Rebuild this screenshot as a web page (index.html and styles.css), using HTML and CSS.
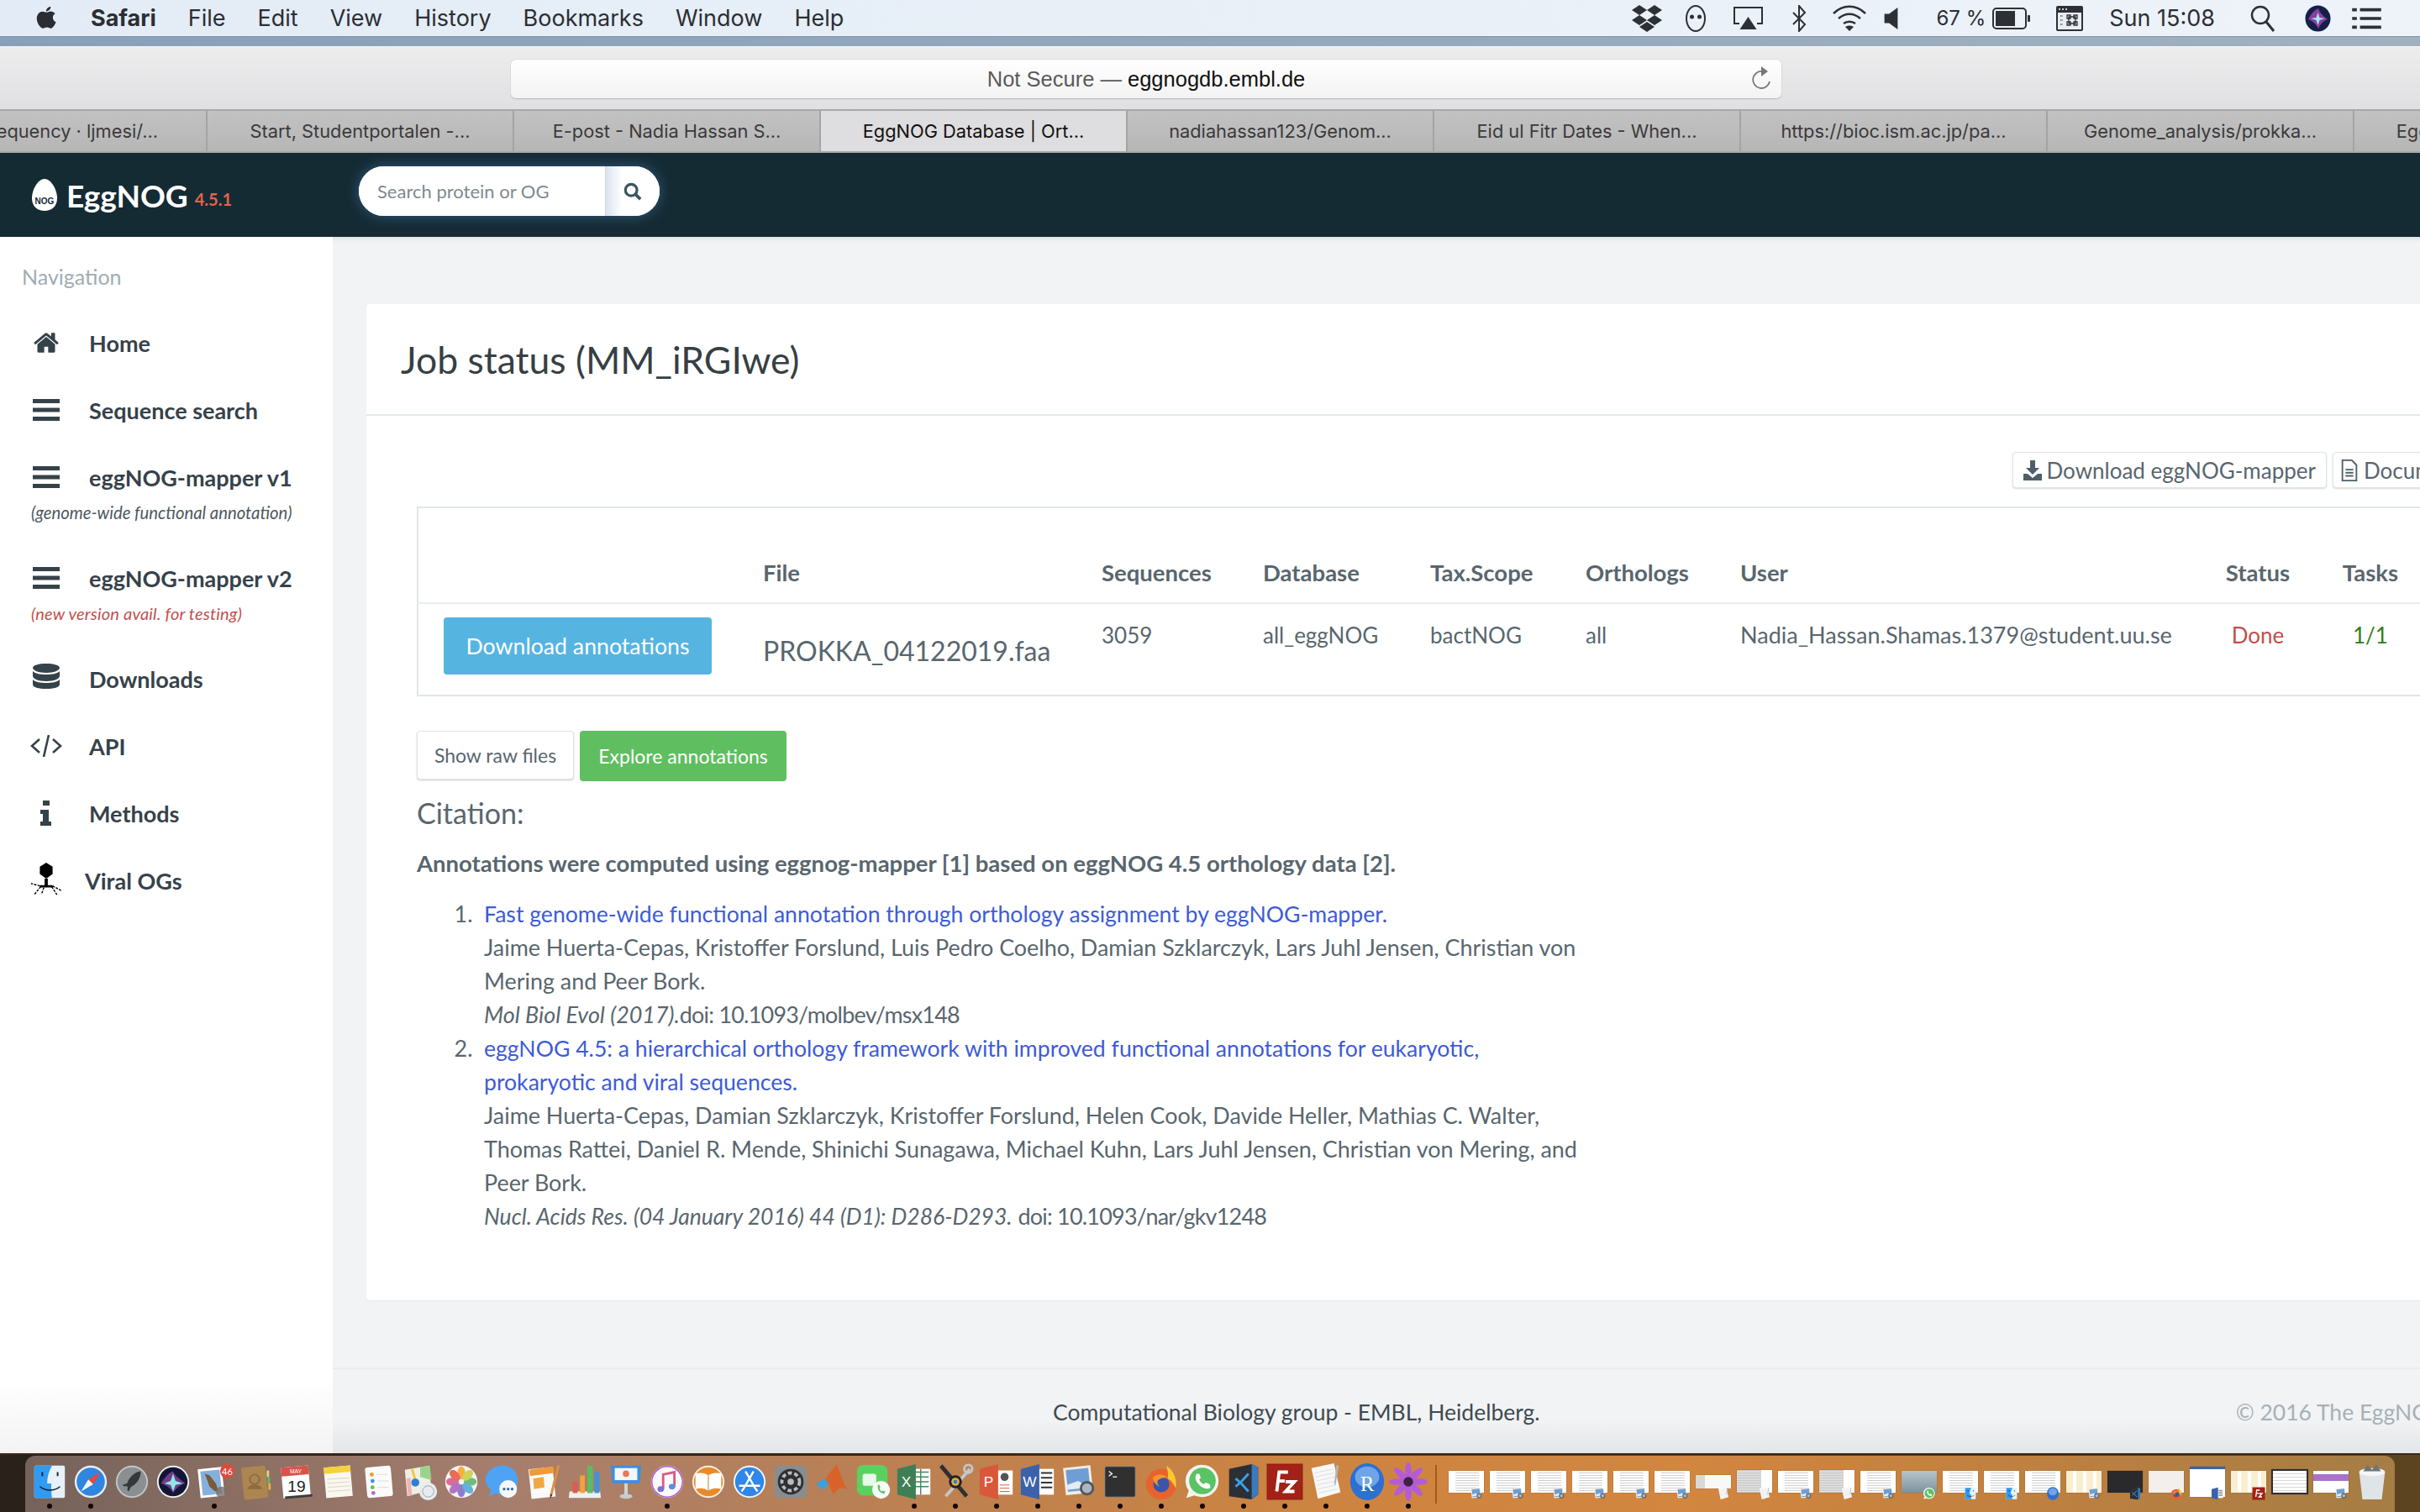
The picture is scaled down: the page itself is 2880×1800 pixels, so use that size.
FILE: index.html
```html
<!DOCTYPE html>
<html lang="en">
<head>
<meta charset="utf-8">
<title>EggNOG Database</title>
<link rel="stylesheet" href="styles.css">
</head>
<body>
<svg class="defs" width="0" height="0" aria-hidden="true">
  <symbol id="i-finder" viewBox="0 0 48 48"><rect x="5" y="4" width="38" height="40" rx="2" fill="#e6f1fb"/><path d="M5 6a2 2 0 0 1 2-2h20c-4 8-6 14-6 22h5c0 6 0 12 1 18H7a2 2 0 0 1-2-2z" fill="#2f9bf2"/><path d="M15 12v5M34 12v5" stroke="#123" stroke-width="2"/><path d="M12 30c7 6 18 6 25 0" stroke="#123" stroke-width="1.600" fill="none"/></symbol>
  <symbol id="i-safari" viewBox="0 0 48 48"><circle cx="24" cy="24" r="20" fill="#e8eef3"/><circle cx="24" cy="24" r="17.500" fill="#2f86e0"/><path d="M36 12 21 21l6 6z" fill="#ef4436"/><path d="M12 36l9-15 6 6z" fill="#f3f6f8"/></symbol>
  <symbol id="i-launch" viewBox="0 0 48 48"><circle cx="24" cy="24" r="20" fill="#c3c6c8"/><circle cx="24" cy="24" r="18" fill="#8a8f92"/><path d="M35 11c-8 1-14 7-17 15l-6 2 3 2 2-1 2 2-1 3 2 2 3-6c8-3 12-12 12-19z" fill="#35383b"/></symbol>
  <symbol id="i-siri" viewBox="0 0 48 48"><circle cx="24" cy="24" r="20" fill="#f0f2f3"/><circle cx="24" cy="24" r="18" fill="#121636"/><path d="M9 26c6-9 10-13 15-15 2 6 9 10 15 15-6 2-11 5-15 12-3-7-9-10-15-12z" fill="#8f4aa8" opacity=".75"/><path d="M24 14l3 9 9 3-9 2-3 8-3-8-8-2 8-3z" fill="#8fe8e4"/></symbol>
  <symbol id="i-mail" viewBox="0 0 48 48"><rect x="5" y="7" width="30" height="36" fill="#fff" transform="rotate(-6 20 24)"/><rect x="8" y="10" width="24" height="30" fill="#86b0dc" transform="rotate(-6 20 24)"/><path d="M12 14l6 2 8 10 3 9-4 1-7-6-3-9z" fill="#7a5a3a"/><circle cx="33" cy="37" r="7" fill="#7e6f68" opacity=".8"/></symbol>
  <symbol id="i-contacts" viewBox="0 0 48 48"><rect x="8" y="5" width="30" height="40" rx="2" fill="#ab8650" transform="rotate(-6 24 24)"/><rect x="38" y="10" width="3" height="8" fill="#e0cf84"/><rect x="39" y="18" width="3" height="8" fill="#6bb36a"/><rect x="40" y="26" width="3" height="8" fill="#e8b03c"/><circle cx="23" cy="21" r="6" fill="none" stroke="#8c6c3e" stroke-width="2"/><path d="M14 33c2-7 16-7 18 0z" fill="#8c6c3e"/></symbol>
  <symbol id="i-cal" viewBox="0 0 48 48"><rect x="6" y="5" width="34" height="38" fill="#fdfdfd" transform="rotate(-5 24 24)"/><rect x="6" y="5" width="34" height="11" fill="#d9534a" transform="rotate(-5 24 24)"/><rect x="8" y="41" width="34" height="3" fill="#3c3c3c" transform="rotate(-5 24 24)"/></symbol>
  <symbol id="i-notes" viewBox="0 0 48 48"><rect x="8" y="5" width="33" height="38" fill="#faf8ee" transform="rotate(-5 24 24)"/><rect x="8" y="5" width="33" height="8" fill="#f5d13c" transform="rotate(-5 24 24)"/><path d="M11 21l28-2M11 26l28-2M12 31l28-2M12 36l28-2" stroke="#d8d3c6"/></symbol>
  <symbol id="i-remind" viewBox="0 0 48 48"><rect x="8" y="5" width="32" height="38" rx="3" fill="#fbfbfb" transform="rotate(-5 24 24)"/><circle cx="15" cy="15" r="2.500" fill="#f39a2b"/><circle cx="16" cy="23" r="2.500" fill="#3f8fe8"/><circle cx="16" cy="31" r="2.500" fill="#6cc04a"/><circle cx="17" cy="38" r="2.500" fill="#b368d8"/><path d="M21 15h14M22 23h14M22 31h14" stroke="#ddd"/></symbol>
  <symbol id="i-maps" viewBox="0 0 48 48"><path d="M5 9l30-5 3 30-30 8z" fill="#eef0e4"/><path d="M24 6l12-2 2 18-14-4z" fill="#9bd38d"/><path d="M7 20l5-1 2 22-5 1z" fill="#f0b4b4"/><path d="M14 8l4 14" stroke="#f2c64c" stroke-width="3"/><circle cx="18" cy="25" r="5" fill="#2e7fd6"/><circle cx="34" cy="36" r="11" fill="#e9ecee"/><circle cx="34" cy="36" r="7" fill="none" stroke="#9aa3a9"/></symbol>
  <symbol id="i-photos" viewBox="0 0 48 48"><circle cx="24" cy="24" r="20" fill="#f4f4f4"/><g opacity=".85"><ellipse cx="24" cy="13" rx="5" ry="8" fill="#f5a623"/><ellipse cx="24" cy="35" rx="5" ry="8" fill="#7b68c8"/><ellipse cx="13" cy="24" rx="8" ry="5" fill="#d2568f"/><ellipse cx="35" cy="24" rx="8" ry="5" fill="#58b368"/><ellipse cx="16" cy="16" rx="5" ry="8" fill="#e8543f" transform="rotate(-45 16 16)"/><ellipse cx="32" cy="16" rx="5" ry="8" fill="#c9cf3f" transform="rotate(45 32 16)"/><ellipse cx="16" cy="32" rx="5" ry="8" fill="#a35fb8" transform="rotate(45 16 32)"/><ellipse cx="32" cy="32" rx="5" ry="8" fill="#4aa7d8" transform="rotate(-45 32 32)"/></g></symbol>
  <symbol id="i-msg" viewBox="0 0 48 48"><path d="M24 4c11 0 19 8 19 18S35 40 24 40c-3 0-6-1-8-2l-9 4 3-8c-4-3-7-8-7-13C3 12 13 4 24 4z" fill="#4ea3f5"/><circle cx="31" cy="33" r="11" fill="#f4f7fa"/><circle cx="26" cy="33" r="1.700" fill="#37689c"/><circle cx="31" cy="33" r="1.700" fill="#37689c"/><circle cx="36" cy="33" r="1.700" fill="#37689c"/></symbol>
  <symbol id="i-pages" viewBox="0 0 48 48"><rect x="7" y="7" width="30" height="37" fill="#fafafa" transform="rotate(-6 22 26)"/><path d="M6 9l30-4 1 8-30 4z" fill="#f29a38"/><path d="M11 20l13-2 1 13-13 2z" fill="#f0a843"/><path d="M41 3l3 1-9 36-3-1z" fill="#e0913c"/><path d="M32 39l3 1-3 5z" fill="#333"/></symbol>
  <symbol id="i-numbers" viewBox="0 0 48 48"><path d="M5 36h38l1 8H4z" fill="#f0f0f0"/><rect x="9" y="24" width="6" height="14" fill="#e05a4d"/><rect x="18" y="16" width="6" height="22" fill="#f2a23a"/><rect x="27" y="4" width="7" height="34" fill="#5dbb63"/><rect x="36" y="12" width="6" height="26" fill="#3f93dc"/></symbol>
  <symbol id="i-keynote" viewBox="0 0 48 48"><path d="M5 4h38l-2 22H7z" fill="#3d8fe0"/><rect x="10" y="7" width="28" height="15" fill="#f4f6f8"/><circle cx="24" cy="14" r="4" fill="#e87b55"/><rect x="22" y="26" width="4" height="15" fill="#d0d6da"/><ellipse cx="24" cy="42" rx="8" ry="3" fill="#c6ccd0"/></symbol>
  <symbol id="i-itunes" viewBox="0 0 48 48"><circle cx="24" cy="24" r="20" fill="#fafafa"/><circle cx="24" cy="24" r="19" fill="none" stroke="#b05ad0" stroke-width="1.500"/><path d="M19 33V15l14-3v18" fill="none" stroke="#d95b87" stroke-width="3"/><ellipse cx="16" cy="33" rx="4" ry="3.500" fill="#7b6ed8"/><ellipse cx="30" cy="30" rx="4" ry="3.500" fill="#5a90e0"/></symbol>
  <symbol id="i-books" viewBox="0 0 48 48"><circle cx="24" cy="24" r="20" fill="#f3f0e8"/><circle cx="24" cy="24" r="18" fill="#e98a28"/><path d="M8 14c6-2 12-1 16 2 4-3 10-4 16-2v19c-6-2-12-1-16 2-4-3-10-4-16-2z" fill="#fff"/><path d="M24 16v19" stroke="#c9782d"/></symbol>
  <symbol id="i-appstore" viewBox="0 0 48 48"><circle cx="24" cy="24" r="20" fill="#f2f6fa"/><circle cx="24" cy="24" r="18" fill="#2f87ea"/><path d="M19 11l12 21M29 11L17 32M11 29h26M14 36l3-4M34 36l-3-4" stroke="#fff" stroke-width="2.500" fill="none"/></symbol>
  <symbol id="i-prefs" viewBox="0 0 48 48"><rect x="4" y="4" width="40" height="40" rx="6" fill="#8a8d8f"/><circle cx="24" cy="24" r="16" fill="#2e3032"/><circle cx="24" cy="24" r="11" fill="none" stroke="#b9bcbe" stroke-width="4" stroke-dasharray="5 3"/><circle cx="24" cy="24" r="4" fill="#b9bcbe"/></symbol>
  <symbol id="i-matlab" viewBox="0 0 48 48"><path d="M4 26l12-6 6 6-10 8z" fill="#3f9fd8"/><path d="M16 20L30 2c3 6 8 26 14 32-8-4-12-3-18 6-4-8-6-14-10-20z" fill="#d9622b"/></symbol>
  <symbol id="i-facetime" viewBox="0 0 48 48"><rect x="4" y="3" width="38" height="38" rx="8" fill="#5ad15f"/><rect x="11" y="14" width="17" height="15" rx="3" fill="#e8f8e9"/><circle cx="34" cy="34" r="11" fill="#fafafa"/><path d="M30 28c-1 6 2 10 8 11l1-3-3-1-1 1c-2-1-2-2-3-4l1-1-1-3z" fill="#5ac15f"/></symbol>
  <symbol id="i-excel" viewBox="0 0 48 48"><rect x="22" y="8" width="22" height="32" fill="#fff"/><path d="M24 12h18M24 18h18M24 24h18M24 30h18M32 8v32" stroke="#3f8a5a" stroke-width="1.500"/><path d="M3 8l23-6v44L3 40z" fill="#3f7f56"/></symbol>
  <symbol id="i-tools" viewBox="0 0 48 48"><path d="M6 4l32 38" stroke="#2f2f2f" stroke-width="5"/><path d="M42 8L12 42" stroke="#c4c7c9" stroke-width="4"/><circle cx="40" cy="8" r="5" fill="none" stroke="#c4c7c9" stroke-width="3"/><circle cx="24" cy="24" r="8" fill="#222"/><circle cx="24" cy="24" r="5" fill="#e8b03c"/><circle cx="24" cy="24" r="2.500" fill="#3a7ed0"/></symbol>
  <symbol id="i-ppt" viewBox="0 0 48 48"><rect x="24" y="10" width="20" height="30" fill="#fff"/><path d="M28 28h12M28 32h12M28 36h12" stroke="#d9563b"/><circle cx="34" cy="18" r="5" fill="#555"/><path d="M3 8l23-6v44L3 40z" fill="#d9583a"/></symbol>
  <symbol id="i-word" viewBox="0 0 48 48"><rect x="22" y="8" width="22" height="32" fill="#fff"/><path d="M28 13h14M28 19h14M28 25h14M28 31h14" stroke="#333" stroke-width="2"/><path d="M3 8l23-6v44L3 40z" fill="#3a62ab"/></symbol>
  <symbol id="i-preview" viewBox="0 0 48 48"><rect x="6" y="5" width="34" height="34" fill="#f1ede4" transform="rotate(-6 24 22)"/><rect x="9" y="8" width="28" height="27" fill="#6f9ed4" transform="rotate(-6 24 22)"/><path d="M9 28l14-5 14 8-27 3z" fill="#e5eef5"/><circle cx="34" cy="32" r="9" fill="#54565a"/><circle cx="34" cy="32" r="6" fill="#a7b8c4"/></symbol>
  <symbol id="i-term" viewBox="0 0 48 48"><rect x="5" y="5" width="38" height="38" rx="2" fill="#303030" stroke="#8d8d8d"/><path d="M10 11l4 3-4 3" stroke="#eee" stroke-width="1.500" fill="none"/><path d="M15 18h5" stroke="#eee" stroke-width="1.500"/></symbol>
  <symbol id="i-firefox" viewBox="0 0 48 48"><circle cx="24" cy="27" r="19" fill="#e8632c"/><path d="M30 4c10 6 14 18 12 28-3-6-6-10-10-12 1-6 0-11-2-16z" fill="#f9c92f"/><circle cx="24" cy="27" r="10" fill="#3d55a8"/><path d="M14 18c6-4 14-4 18 2-4-2-8-1-12 2-2 3 0 6 2 8-5-2-9-7-8-12z" fill="#f4932f"/></symbol>
  <symbol id="i-whatsapp" viewBox="0 0 48 48"><path d="M24 3a20 20 0 0 1 0 40c-4 0-7-1-10-2l-10 3 3-9A20 20 0 0 1 24 3z" fill="#f2f4f2"/><circle cx="24" cy="23" r="16.500" fill="#5ac363"/><path d="M17 14c-3 3-2 9 3 14s11 6 14 3l-1-4-5-2-2 2c-3-1-5-3-6-6l2-2-2-5z" fill="#fff"/></symbol>
  <symbol id="i-vscode" viewBox="0 0 48 48"><path d="M6 8l28-6 8 4v34l-8 6-28-4z" fill="#2b2f36"/><path d="M34 2l8 4v34l-8 6z" fill="#3a79bd"/><path d="M14 20l6 5-6 5M30 14L20 25l10 11" stroke="#3fa0e6" stroke-width="3" fill="none"/></symbol>
  <symbol id="i-fz" viewBox="0 0 48 48"><rect x="2" y="2" width="44" height="44" fill="#a32116" stroke="#7e1810" stroke-dasharray="2 1"/><path d="M14 36l3-24h11M15 23h9M25 24h11L25 36h11" fill="none" stroke="#fff" stroke-width="4"/></symbol>
  <symbol id="i-textedit" viewBox="0 0 48 48"><path d="M6 7l28-6 8 36-28 8z" fill="#f8f8f8"/><path d="M10 13l23-5M11 18l23-5M12 23l23-5M13 28l23-5M14 33l23-5M15 38l23-5" stroke="#dcdcdc"/><path d="M37 3l3 1-4 24-2-1z" fill="#aeb9bf"/></symbol>
  <symbol id="i-r" viewBox="0 0 48 48"><ellipse cx="24" cy="24" rx="21" ry="23" fill="#2d6fd3"/><ellipse cx="24" cy="18" rx="15" ry="13" fill="#8cbcf0" opacity=".7"/></symbol>
  <symbol id="i-dahlia" viewBox="0 0 48 48"><g fill="#b45bd8"><ellipse cx="24" cy="11" rx="4" ry="11"/><ellipse cx="24" cy="37" rx="4" ry="11"/><ellipse cx="11" cy="24" rx="11" ry="4"/><ellipse cx="37" cy="24" rx="11" ry="4"/><ellipse cx="24" cy="11" rx="4" ry="11" transform="rotate(45 24 24)"/><ellipse cx="24" cy="11" rx="4" ry="11" transform="rotate(135 24 24)"/><ellipse cx="24" cy="11" rx="4" ry="11" transform="rotate(225 24 24)"/><ellipse cx="24" cy="11" rx="4" ry="11" transform="rotate(315 24 24)"/></g><circle cx="24" cy="24" r="6" fill="#3c2440"/></symbol>
  <symbol id="i-trash" viewBox="0 0 48 48"><path d="M8 12h32l-4 34H12z" fill="#dfe4e6"/><ellipse cx="24" cy="12" rx="16" ry="5" fill="#f4f6f7"/><path d="M13 11l5-8 6 6 5-7 6 9z" fill="#6f757a"/></symbol>
</svg>

<div class="screen">
  <div class="menubar">
    <svg class="apple" viewBox="0 0 24 28"><path fill="#2a2d33" d="M17 1c.2 2-1.900 5-5 5-.3-2.500 2.300-5 5-5zM12.300 7.200c1.200 0 2.700-1.200 4.700-1.200 1.500 0 3.600.7 4.900 2.700-3.800 2.300-3.100 7.800.9 9.300-.8 2.400-3.400 7-5.700 7-1.700 0-2.300-1.100-4.300-1.100s-2.700 1.100-4.300 1.100C5.800 25 1.500 19.300 1.500 14.200c0-5 3.300-7.900 6.300-7.900 1.900 0 3.300.9 4.500.9z"/></svg>
    <span class="mitem mbold">Safari</span>
    <span class="mitem">File</span>
    <span class="mitem">Edit</span>
    <span class="mitem">View</span>
    <span class="mitem">History</span>
    <span class="mitem">Bookmarks</span>
    <span class="mitem">Window</span>
    <span class="mitem">Help</span>
    <div class="status">
      <svg class="st st-dropbox" viewBox="0 0 38 32"><path fill="#2d3035" d="M10 0l9 6-9 6-9-6zM28 0l9 6-9 6-9-6zM10 12l9 6-9 6-9-6zM28 12l9 6-9 6-9-6zM19 20l9 6-9 6-9-6z"/></svg>
      <svg class="st st-ghost" viewBox="0 0 30 32"><ellipse cx="15" cy="16" rx="11" ry="15" fill="none" stroke="#2d3035" stroke-width="2"/><circle cx="10.500" cy="14" r="2.500" fill="#2d3035"/><circle cx="19.500" cy="14" r="2.500" fill="#2d3035"/></svg>
      <svg class="st st-airplay" viewBox="0 0 37 30"><path d="M8 21H2V2h33v19h-6" fill="none" stroke="#2d3035" stroke-width="2"/><path d="M18.500 13l10 15h-20z" fill="#2d3035"/></svg>
      <svg class="st st-bt" viewBox="0 0 22 32"><path d="M4 9l14 14-7 8V1l7 8L4 23" fill="none" stroke="#2d3035" stroke-width="2"/></svg>
      <svg class="st st-wifi" viewBox="0 0 42 32"><path d="M2 10c11-11 27-11 38 0M8 16c8-7 18-7 26 0M14 22c4-3 10-3 14 0" fill="none" stroke="#2d3035" stroke-width="2.500"/><path d="M21 31l-5-5c3-2 7-2 10 0z" fill="#2d3035"/></svg>
      <svg class="st st-speaker" viewBox="0 0 17 28"><path d="M0 8h6l11-8v28L6 20H0z" fill="#2d3035"/></svg>
      <span class="stext st-pct">67 %</span>
      <svg class="st st-batt" viewBox="0 0 46 26"><rect x="1" y="1" width="39" height="24" rx="4" fill="none" stroke="#2d3035" stroke-width="2"/><rect x="4" y="4" width="23" height="18" fill="#2d3035"/><rect x="42" y="9" width="3" height="8" rx="1" fill="#2d3035"/></svg>
      <svg class="st st-cal" viewBox="0 0 32 30"><rect width="32" height="30" rx="2" fill="#2d3035"/><path d="M3 4h2M7 4h2M11 4h2" stroke="#fff" stroke-width="1.500"/><rect x="2" y="8" width="28" height="20" fill="#e9edf2"/><path d="M15 13h8v8h-8zM13 11h4v4h-4zM21 11h4v4h-4zM13 19h4v4h-4zM21 19h4v4h-4z" fill="none" stroke="#2d3035" stroke-width="1.300"/><path d="M5 12h3M5 17h3M5 22h3" stroke="#777" stroke-width="2" stroke-dasharray="1.500 1"/></svg>
      <span class="stext st-time">Sun 15:08</span>
      <svg class="st st-search" viewBox="0 0 30 32"><circle cx="12" cy="12" r="10" fill="none" stroke="#2d3035" stroke-width="2.500"/><path d="M19 20l9 11" stroke="#2d3035" stroke-width="3"/></svg>
      <svg class="st st-siri" viewBox="0 0 31 32"><ellipse cx="15.500" cy="16" rx="15" ry="15.500" fill="#14204a"/><path d="M4 17C8 9 12 6 16 4c2 6 6 9 11 13-5 2-8 5-11 11-3-6-7-9-12-11z" fill="#8a3f9c"/><path d="M15.500 9l2 6 6 1-6 2-2 6-2-6-6-2 6-1z" fill="#9ee8f0"/></svg>
      <svg class="st st-list" viewBox="0 0 37 30"><path d="M0 4h6M10 4h27M0 15h6M10 15h27M0 26h6M10 26h27" stroke="#2d3035" stroke-width="4"/></svg>
    </div>
  </div>
  <div class="deskband"></div>
  <div class="toolbar">
    <div class="urlbar">
      <span class="url"><span class="url-dim">Not Secure — </span>eggnogdb.embl.de</span>
      <svg class="reload" viewBox="0 0 24 28"><path d="M12 6a10 10 0 1 0 9 12" fill="none" stroke="#777" stroke-width="1.800"/><path d="M11 0l8 6-8 6z" fill="#777"/></svg>
    </div>
  </div>
  <div class="tabs">
    <div class="tab tab-first">Allele frequency · ljmesi/...</div>
    <div class="tab">Start, Studentportalen -...</div>
    <div class="tab">E-post - Nadia Hassan S...</div>
    <div class="tab tab-active">EggNOG Database | Ort...</div>
    <div class="tab">nadiahassan123/Genom...</div>
    <div class="tab">Eid ul Fitr Dates - When...</div>
    <div class="tab">https://bioc.ism.ac.jp/pa...</div>
    <div class="tab">Genome_analysis/prokka...</div>
    <div class="tab">EggNOG Database | Ort...</div>
  </div>

  <header class="sitebar">
    <div class="brand">
      <svg class="egg" viewBox="0 0 30 38"><path d="M15 0c8 0 15 13 15 23S23 38 15 38 0 33 0 23 7 0 15 0z" fill="#fff"/><text x="15" y="30" class="ic-t ic-nog">NOG</text></svg>
      <span class="brand-name">EggNOG</span>
      <span class="brand-ver">4.5.1</span>
    </div>
    <div class="search">
      <span class="search-input">Search protein or OG</span>
      <span class="search-btn"><svg class="search-ic" viewBox="0 0 24 24"><circle cx="10" cy="10" r="7.500" fill="none" stroke="#3e5560" stroke-width="3.500"/><path d="M15.500 15.500l6.500 6.500" stroke="#3e5560" stroke-width="4"/></svg></span>
    </div>
  </header>

  <div class="content">
    <aside class="sidebar">
      <div class="nav-label">Navigation</div>
      <a class="nav-item"><svg class="nav-ic" viewBox="0 0 1792 1536"><path fill="#36424a" transform="translate(0 -128)" d="M1472 992v480q0 26-19 45t-45 19h-384v-384h-256v384h-384q-26 0-45-19t-19-45v-480q0-1 .5-3t.5-3l575-474 575 474q1 2 1 6zm223-69l-62 74q-8 9-21 11h-3q-13 0-21-7l-692-577-692 577q-12 8-24 7-13-2-21-11l-62-74q-8-10-7-23.500t11-21.500l719-599q32-26 76-26t76 26l244 204v-195q0-14 9-23t23-9h192q14 0 23 9t9 23v408l219 182q10 8 11 21.500t-7 23.500z"/></svg><span>Home</span></a>
      <a class="nav-item"><svg class="nav-ic" viewBox="0 0 32 28"><path fill="#36424a" d="M0 1h32v5H0zM0 11.500h32v5H0zM0 22h32v5H0z"/></svg><span>Sequence search</span></a>
      <a class="nav-item"><svg class="nav-ic" viewBox="0 0 32 28"><path fill="#36424a" d="M0 1h32v5H0zM0 11.500h32v5H0zM0 22h32v5H0z"/></svg><span>eggNOG-mapper v1</span></a>
      <div class="nav-note">(genome-wide functional annotation)</div>
      <a class="nav-item"><svg class="nav-ic" viewBox="0 0 32 28"><path fill="#36424a" d="M0 1h32v5H0zM0 11.500h32v5H0zM0 22h32v5H0z"/></svg><span>eggNOG-mapper v2</span></a>
      <div class="nav-note nav-note-new">(new version avail. for testing)</div>
      <a class="nav-item"><svg class="nav-ic nav-ic-db" viewBox="0 0 32 36"><path fill="#36424a" d="M16 0c9 0 16 2 16 5s-7 6-16 6S0 8 0 5s7-5 16-5zM0 9c3 3 9 4 16 4s13-1 16-4v6c0 3-7 6-16 6S0 18 0 15zM0 19c3 3 9 4 16 4s13-1 16-4v6c0 3-7 5-16 5S0 28 0 25z"/></svg><span>Downloads</span></a>
      <a class="nav-item"><svg class="nav-ic nav-ic-wide" viewBox="0 0 38 30"><path d="M11 7L2 15l9 8M27 7l9 8-9 8M22 2l-6 26" fill="none" stroke="#36424a" stroke-width="2.600"/></svg><span>API</span></a>
      <a class="nav-item"><svg class="nav-ic nav-ic-info" viewBox="0 0 14 30"><path fill="#36424a" d="M3 0h8v6H3zM0 11h10v14h3v5H0v-5h3v-9H0z"/></svg><span>Methods</span></a>
      <a class="nav-item nav-item-viral"><svg class="nav-ic nav-ic-viral" viewBox="0 0 40 44"><path fill="#000" d="M20 0l8 5v9l-8 6-8-6V5zM18 20h4v10h-4zM12 28h16v3H12z"/><path d="M12 29L1 26M13 30L5 40M28 29l11 6M27 30l7 11M17 31l-3 9" fill="none" stroke="#000" stroke-width="1.500" stroke-dasharray="3 1.500"/></svg><span>Viral OGs</span></a>
    </aside>

    <main class="main">
      <section class="card">
        <h1 class="card-title">Job status (MM_iRGIwe)</h1>
        <div class="card-body">
          <div class="toolrow">
            <a class="btn btn-tool"><svg class="btn-ic" viewBox="0 0 22 24"><path fill="#4f5f68" d="M8 0h6v9h5l-8 8-8-8h5zM0 16h5l6 5 6-5h5v8H0z"/></svg>Download eggNOG-mapper</a>
            <a class="btn btn-tool btn-doc"><svg class="btn-ic" viewBox="0 0 20 28"><path d="M1 1h12l6 6v20H1zM5 13h10M5 17h10M5 21h10" fill="none" stroke="#4f5f68" stroke-width="2"/></svg>Documentation</a>
          </div>
          <table class="jobs">
            <colgroup><col class="c-act"><col class="c-file"><col class="c-seq"><col class="c-db"><col class="c-tax"><col class="c-orth"><col class="c-user"><col class="c-status"><col class="c-tasks"><col></colgroup>
            <thead>
              <tr><th></th><th>File</th><th>Sequences</th><th>Database</th><th>Tax.Scope</th><th>Orthologs</th><th>User</th><th class="ctr">Status</th><th class="ctr">Tasks</th><th></th></tr>
            </thead>
            <tbody>
              <tr>
                <td class="td-act"><a class="btn btn-info">Download annotations</a></td>
                <td class="td-file">PROKKA_04122019.faa</td>
                <td>3059</td><td>all_eggNOG</td><td>bactNOG</td><td>all</td>
                <td class="td-user">Nadia_Hassan.Shamas.1379@student.uu.se</td>
                <td class="ctr done">Done</td>
                <td class="ctr tasks">1/1</td><td></td>
              </tr>
            </tbody>
          </table>
          <div class="actions">
            <a class="btn btn-plain">Show raw files</a>
            <a class="btn btn-green">Explore annotations</a>
          </div>
          <h2 class="cite-h">Citation:</h2>
          <p class="cite-lead">Annotations were computed using eggnog-mapper [1] based on eggNOG 4.5 orthology data [2].</p>
          <ol class="refs">
            <li><a class="ref-link">Fast genome-wide functional annotation through orthology assignment by eggNOG-mapper.</a><br>
              Jaime Huerta-Cepas, Kristoffer Forslund, Luis Pedro Coelho, Damian Szklarczyk, Lars Juhl Jensen, Christian von<br>
              Mering and Peer Bork.<br>
              <em>Mol Biol Evol (2017).</em><span class="doi">doi: 10.1093/molbev/msx148</span></li>
            <li><a class="ref-link">eggNOG 4.5: a hierarchical orthology framework with improved functional annotations for eukaryotic,<br>
              prokaryotic and viral sequences.</a><br>
              Jaime Huerta-Cepas, Damian Szklarczyk, Kristoffer Forslund, Helen Cook, Davide Heller, Mathias C. Walter,<br>
              Thomas Rattei, Daniel R. Mende, Shinichi Sunagawa, Michael Kuhn, Lars Juhl Jensen, Christian von Mering, and<br>
              Peer Bork.<br>
              <em class="em-tight">Nucl. Acids Res. (04 January 2016) 44 (D1): D286-D293.</em> <span class="doi">doi: 10.1093/nar/gkv1248</span></li>
          </ol>
        </div>
      </section>
      <footer class="foot">
        <span class="foot-mid">Computational Biology group - EMBL, Heidelberg.</span>
        <span class="foot-copy">© 2016 The EggNOG</span>
      </footer>
    </main>
  </div>

  <div class="dock-strip">
    <div class="dock">
      <div class="slot"><svg class="app"><use href="#i-finder"/></svg><i class="dot"></i></div>
      <div class="slot"><svg class="app"><use href="#i-safari"/></svg><i class="dot"></i></div>
      <div class="slot"><svg class="app"><use href="#i-launch"/></svg></div>
      <div class="slot"><svg class="app"><use href="#i-siri"/></svg></div>
      <div class="slot"><svg class="app"><use href="#i-mail"/></svg><b class="badge">46</b><i class="dot"></i></div>
      <div class="slot"><svg class="app"><use href="#i-contacts"/></svg></div>
      <div class="slot"><svg class="app" viewBox="0 0 48 48"><use href="#i-cal"/><text x="23" y="14" class="ic-t ic-may">MAY</text><text x="24" y="37" class="ic-t ic-day">19</text></svg></div>
      <div class="slot"><svg class="app"><use href="#i-notes"/></svg></div>
      <div class="slot"><svg class="app"><use href="#i-remind"/></svg></div>
      <div class="slot"><svg class="app"><use href="#i-maps"/></svg></div>
      <div class="slot"><svg class="app"><use href="#i-photos"/></svg></div>
      <div class="slot"><svg class="app"><use href="#i-msg"/></svg></div>
      <div class="slot"><svg class="app"><use href="#i-pages"/></svg></div>
      <div class="slot"><svg class="app"><use href="#i-numbers"/></svg></div>
      <div class="slot"><svg class="app"><use href="#i-keynote"/></svg></div>
      <div class="slot"><svg class="app"><use href="#i-itunes"/></svg><i class="dot"></i></div>
      <div class="slot"><svg class="app"><use href="#i-books"/></svg></div>
      <div class="slot"><svg class="app"><use href="#i-appstore"/></svg></div>
      <div class="slot"><svg class="app"><use href="#i-prefs"/></svg></div>
      <div class="slot"><svg class="app"><use href="#i-matlab"/></svg></div>
      <div class="slot"><svg class="app"><use href="#i-facetime"/></svg></div>
      <div class="slot"><svg class="app" viewBox="0 0 48 48"><use href="#i-excel"/><text x="14" y="30" class="ic-t ic-x">X</text></svg><i class="dot"></i></div>
      <div class="slot"><svg class="app"><use href="#i-tools"/></svg><i class="dot"></i></div>
      <div class="slot"><svg class="app" viewBox="0 0 48 48"><use href="#i-ppt"/><text x="14" y="30" class="ic-t ic-x">P</text></svg><i class="dot"></i></div>
      <div class="slot"><svg class="app" viewBox="0 0 48 48"><use href="#i-word"/><text x="14" y="30" class="ic-t ic-x">W</text></svg><i class="dot"></i></div>
      <div class="slot"><svg class="app"><use href="#i-preview"/></svg><i class="dot"></i></div>
      <div class="slot"><svg class="app"><use href="#i-term"/></svg><i class="dot"></i></div>
      <div class="slot"><svg class="app"><use href="#i-firefox"/></svg><i class="dot"></i></div>
      <div class="slot"><svg class="app"><use href="#i-whatsapp"/></svg><i class="dot"></i></div>
      <div class="slot"><svg class="app"><use href="#i-vscode"/></svg><i class="dot"></i></div>
      <div class="slot"><svg class="app"><use href="#i-fz"/></svg><i class="dot"></i></div>
      <div class="slot"><svg class="app"><use href="#i-textedit"/></svg><i class="dot"></i></div>
      <div class="slot"><svg class="app" viewBox="0 0 48 48"><use href="#i-r"/><text x="24" y="35" class="ic-t ic-r">R</text></svg><i class="dot"></i></div>
      <div class="slot"><svg class="app"><use href="#i-dahlia"/></svg><i class="dot"></i></div>
      <div class="dock-sep"></div>
      <div class="slot"><div class="thumb"></div><svg class="mini"><use href="#i-preview"/></svg></div>
      <div class="slot"><div class="thumb"></div><svg class="mini"><use href="#i-preview"/></svg></div>
      <div class="slot"><div class="thumb"></div><svg class="mini"><use href="#i-preview"/></svg></div>
      <div class="slot"><div class="thumb"></div><svg class="mini"><use href="#i-preview"/></svg></div>
      <div class="slot"><div class="thumb"></div><svg class="mini"><use href="#i-preview"/></svg></div>
      <div class="slot"><div class="thumb"></div><svg class="mini"><use href="#i-preview"/></svg></div>
      <div class="slot"><div class="thumb thumb-short"></div><svg class="mini"><use href="#i-textedit"/></svg></div>
      <div class="slot"><div class="thumb thumb-tall thumb-dense"></div><svg class="mini"><use href="#i-textedit"/></svg></div>
      <div class="slot"><div class="thumb"></div><svg class="mini"><use href="#i-preview"/></svg></div>
      <div class="slot"><div class="thumb thumb-tall thumb-dense"></div><svg class="mini"><use href="#i-textedit"/></svg></div>
      <div class="slot"><div class="thumb"></div><svg class="mini"><use href="#i-preview"/></svg></div>
      <div class="slot"><div class="thumb thumb-photo"></div><svg class="mini"><use href="#i-whatsapp"/></svg></div>
      <div class="slot"><div class="thumb"></div><svg class="mini"><use href="#i-finder"/></svg></div>
      <div class="slot"><div class="thumb"></div><svg class="mini"><use href="#i-finder"/></svg></div>
      <div class="slot"><div class="thumb"></div><svg class="mini"><use href="#i-r"/></svg></div>
      <div class="slot"><div class="thumb thumb-yellow"></div><svg class="mini"><use href="#i-preview"/></svg></div>
      <div class="slot"><div class="thumb thumb-dark"></div><svg class="mini"><use href="#i-vscode"/></svg></div>
      <div class="slot"><div class="thumb thumb-blank"></div><svg class="mini"><use href="#i-firefox"/></svg></div>
      <div class="slot"><div class="thumb thumb-blue"></div><svg class="mini"><use href="#i-word"/></svg></div>
      <div class="slot"><div class="thumb thumb-yellow"></div><svg class="mini"><use href="#i-fz"/></svg></div>
      <div class="slot"><div class="thumb thumb-frame"></div></div>
      <div class="slot"><div class="thumb thumb-purple"></div><svg class="mini"><use href="#i-preview"/></svg></div>
      <div class="slot"><svg class="app"><use href="#i-trash"/></svg></div>
    </div>
  </div>
</div>
</body>
</html>
```

FILE: styles.css
```css
* { box-sizing: border-box; }
html, body { margin: 0; padding: 0; }
body { width: 2880px; height: 1800px; overflow: hidden; font-family: "Lato", "Open Sans", sans-serif; color: #58666e; background: #1f1712; }
.defs { position: absolute; }
.screen { width: 2880px; height: 1800px; display: flex; flex-direction: column; overflow: hidden; }

.menubar { height: 44px; flex: none; display: flex; align-items: center; padding-left: 42px; background: linear-gradient(90deg, #e3ecf6, #eef3f9); font-family: "Inter", "Liberation Sans", sans-serif; font-size: 27px; color: #2b2e34; border-bottom: 1px solid #7f93a8; }
.apple { width: 26px; height: 30px; margin-right: 40px; }
.mitem { margin-right: 38px; }
.mbold { font-weight: 700; }
.status { margin-left: auto; display: flex; align-items: center; padding-right: 45px; }
.stext { font-size: 27px; }
.st { flex: none; display: block; }
.st-dropbox { width: 38px; height: 32px; }
.st-ghost { width: 30px; height: 32px; margin-left: 24px; }
.st-airplay { width: 37px; height: 30px; margin-left: 29px; }
.st-bt { width: 22px; height: 32px; margin-left: 31px; }
.st-wifi { width: 42px; height: 32px; margin-left: 28px; }
.st-speaker { width: 17px; height: 26px; margin-left: 20px; }
.st-pct { margin-left: 45px; font-size: 24px; }
.st-batt { width: 46px; height: 26px; margin-left: 8px; }
.st-cal { width: 32px; height: 30px; margin-left: 30px; }
.st-time { margin-left: 31px; }
.st-search { width: 30px; height: 32px; margin-left: 42px; }
.st-siri { width: 31px; height: 32px; margin-left: 35px; }
.st-list { width: 37px; height: 28px; margin-left: 24px; }

.deskband { height: 11px; flex: none; background: linear-gradient(90deg, #88a0b9, #a0b1c0); }

.toolbar { height: 75px; flex: none; display: flex; align-items: flex-start; padding: 15px 0 0 608px; background: linear-gradient(#eeedee, #e0dfe1); border-top: 1px solid #f7f7f7; }
.urlbar { width: 1512px; height: 46px; display: flex; align-items: center; justify-content: center; position: relative; border-radius: 6px; background: linear-gradient(#ffffff, #f3f3f3); box-shadow: 0 1px 1px #b5b5b5, 0 0 0 1px #dcdcdc; font-family: "Liberation Sans", sans-serif; font-size: 25.500px; color: #111; }
.url-dim { color: #5a5a5a; }
.reload { position: absolute; right: 11px; top: 8px; width: 24px; height: 28px; }

.tabs { height: 52px; flex: none; display: flex; margin-left: -118px; background: #bdbcbd; border-top: 2px solid #a9a8a9; border-bottom: 2px solid #a9a8a9; font-family: "Inter", "Liberation Sans", sans-serif; font-size: 21.800px; color: #3a3a3a; }
.tab { width: 365px; flex: none; display: flex; align-items: center; justify-content: center; background: linear-gradient(#c3c2c3, #b7b6b7); border-right: 2px solid #a5a4a5; white-space: nowrap; }
.tab-first { justify-content: flex-end; padding-right: 57px; }
.tab-active { background: #dedddf; color: #111; }

.sitebar { height: 100px; flex: none; display: flex; align-items: center; background: #152b34; position: relative; z-index: 2; }
.brand { width: 427px; display: flex; align-items: center; padding-left: 38px; }
.egg { width: 30px; height: 38px; margin-right: 11px; }
.brand-name { font-size: 37px; font-weight: 700; color: #fff; }
.brand-ver { font-size: 20px; font-weight: 700; color: #e8604c; margin: 10px 0 0 8px; }
.search { width: 358px; height: 59px; display: flex; border-radius: 30px; box-shadow: 0 0 16px rgba(80,140,200,.5); overflow: hidden; background: #fff; margin-top: -9px; }
.search-input { width: 294px; display: flex; align-items: center; padding-left: 22px; background: #fff; color: #7d8a91; font-size: 22px; border-right: 1px solid #cfdae3; }
.search-btn { flex: 1; display: flex; align-items: center; justify-content: center; background: linear-gradient(90deg, #d9e4ee, #fff 30%); }
.search-ic { width: 22px; height: 22px; }

.content { flex: 1; min-height: 0; display: flex; }
.sidebar { width: 396px; flex: none; padding-top: 30px; background: linear-gradient(#fff, #fff 94%, #f3f3f3); }
.nav-label { height: 34px; line-height: 34px; padding-left: 26px; margin-bottom: 22px; font-size: 25px; color: #a0acb3; }
.nav-item { height: 80px; display: flex; align-items: center; gap: 32px; padding-left: 36px; font-size: 27px; font-weight: 700; color: #36424a; white-space: nowrap; }
.nav-ic { width: 38px; height: 28px; flex: none; }
.nav-ic-db { height: 36px; }
.nav-ic-wide { height: 30px; }
.nav-ic-info { height: 30px; }
.nav-ic-viral { height: 44px; }
.nav-item-viral { gap: 27px; }
.nav-note { height: 50px; margin-top: -10px; padding-left: 37px; line-height: 24px; font-size: 20.300px; font-style: italic; color: #4d5960; }
.nav-note-new { color: #c0504d; letter-spacing: .2px; font-size: 20px; }

.main { flex: 1; min-width: 0; display: flex; flex-direction: column; background: #f1f3f5; padding: 80px 0 0 40px; box-shadow: inset 0 8px 8px -8px rgba(0,0,0,.12); overflow: hidden; }
.card { width: 2640px; height: 1186px; flex: none; background: #fff; border-radius: 4px; box-shadow: 0 1px 2px rgba(0,0,0,.05); }
.card-title { height: 133px; margin: 0; padding-left: 41px; display: flex; align-items: center; font-size: 44.500px; font-weight: 400; color: #363f44; border-bottom: 2px solid #e4e8eb; }
.card-body { padding: 43px 60px 0; }
.toolrow { display: flex; justify-content: flex-end; gap: 7px; height: 65px; }
.btn { display: inline-flex; align-items: center; justify-content: center; border-radius: 4px; white-space: nowrap; }
.btn-tool { height: 43px; padding: 0 12px; font-size: 26px; background: #fff; border: 1px solid #dfe4e7; box-shadow: 0 1px 2px rgba(0,0,0,.15); color: #58666e; }
.btn-doc { width: 240px; justify-content: flex-start; padding-left: 8px; }
.btn-ic { width: 22px; height: 26px; margin-right: 6px; }

.jobs { width: 2520px; height: 226px; table-layout: fixed; border-collapse: collapse; border: 2px solid #e2e6e9; font-size: 26px; }
.c-act { width: 395px; }
.c-file { width: 403px; }
.c-seq { width: 192px; }
.c-db { width: 199px; }
.c-tax { width: 185px; }
.c-orth { width: 184px; }
.c-user { width: 577px; }
.c-status { width: 110px; }
.c-tasks { width: 158px; }
.jobs th { height: 114px; padding: 0 16px 19px; vertical-align: bottom; text-align: left; font-size: 27.500px; font-weight: 700; border-bottom: 2px solid #e9ecee; white-space: nowrap; }
.jobs td { padding: 21px 16px 0; vertical-align: top; white-space: nowrap; }
.jobs .ctr { text-align: center; }
.jobs .td-act { padding: 16px 0 0 30px; }
.jobs .td-file { padding-top: 36px; font-size: 32px; }
.jobs .td-user { font-size: 27px; padding-top: 20px; }
.done { color: #c0504d; }
.tasks { color: #2f7d16; }
.btn-info { width: 319px; height: 68px; background: #56b4e1; color: #fff; font-size: 26.700px; }
.actions { display: flex; gap: 7px; margin-top: 41px; }
.btn-plain { width: 187px; height: 58px; background: #fff; border: 1px solid #dfe4e7; box-shadow: 0 1px 2px rgba(0,0,0,.2); font-size: 23px; }
.btn-green { width: 246px; height: 60px; background: #5fbe60; color: #fff; font-size: 23px; }
.cite-h { margin: 16px 0 0; height: 44px; line-height: 44px; font-size: 34px; font-weight: 400; }
.cite-lead { margin: 18px 0 0; height: 40px; line-height: 40px; font-size: 27.500px; font-weight: 700; }
.refs { margin: 20px 0 0; padding-left: 80px; font-size: 26.900px; line-height: 40px; white-space: nowrap; }
.refs li::marker { content: counter(list-item) ".\2002"; }
.ref-link { color: #3d5bd8; font-size: 26.600px; }
.em-tight { font-size: 26.500px; }
.doi { letter-spacing: -.75px; }

.foot { margin: 80px 0 0 -40px; flex: 1; display: flex; align-items: flex-start; gap: 828px; padding: 35px 0 0 857px; border-top: 2px solid #e9ecee; background: linear-gradient(#f1f3f5, #f1f3f5 60%, #e3e6e8); font-size: 26.500px; color: #3f4a51; white-space: nowrap; }
.foot-copy { color: #a7b0b6; }

.dock-strip { height: 70px; flex: none; padding: 1px 0 0 30px; background: linear-gradient(90deg, #2b211b, #241a14 30%, #5b3a14 60%, #4a3a1a 85%, #5c4420); border-top: 2px solid #3a2a18; }
.dock { width: 2820px; height: 67px; display: flex; padding: 8px 0 0 4px; border-radius: 12px 12px 0 0; background: linear-gradient(90deg, #75625a, #a67e6e 20%, #bb8053 36%, #cd8440 55%, #d28640 70%, #c3813f 82%, #a57d45 100%); }
.slot { width: 49px; height: 59px; flex: none; position: relative; display: flex; justify-content: center; }
.app { width: 46px; height: 46px; display: block; }
.dot { position: absolute; left: 21.500px; top: 49px; width: 6px; height: 6px; border-radius: 50%; background: #140606; }
.badge { position: absolute; left: 32px; top: 2px; width: 17px; height: 17px; border-radius: 50%; background: #e2483d; color: #fff; font-size: 11px; line-height: 17px; text-align: center; font-weight: 400; }
.dock-sep { width: 2px; height: 46px; flex: none; margin: 3px 10px 0 8px; background: #a8581c; }
.thumb { width: 42px; height: 26px; margin-top: 10px; background: linear-gradient(90deg, #fff 0 20%, transparent 20% 85%, #fff 85%), repeating-linear-gradient(#fff 0 2px, #cfcfcf 2px 3px); box-shadow: 0 0 1px rgba(0,0,0,.4); }
.thumb-short { height: 16px; margin-top: 15px; background: linear-gradient(90deg, #d8d8d8 0 25%, #f8f8f8 25%); }
.thumb-tall { height: 27px; margin-top: 9px; }
.thumb-dense { background: linear-gradient(90deg, transparent 0 70%, #fff 70%), repeating-linear-gradient(#c4c4c4 0 1px, #e8e8e8 1px 2px); }
.thumb-photo { background: linear-gradient(#b8c4c8, #7d93a0); }
.thumb-yellow { background: repeating-linear-gradient(90deg, #f8efcf 0 8px, #fff 8px 12px); }
.thumb-dark { background: #2a2a2c; }
.thumb-blank { background: #f2efec; }
.thumb-blue { background: linear-gradient(#3a62ab 0 3px, #fff 3px); height: 36px; margin-top: 5px; }
.thumb-frame { width: 44px; height: 30px; margin-top: 8px; background: repeating-linear-gradient(#fff 0 3px, #d9d9d9 3px 4px); border: 2px solid #2e2e2e; }
.thumb-purple { background: linear-gradient(#fff 0 4px, #a873c8 4px 12px, #fff 12px); }
.mini { position: absolute; right: 4px; top: 29px; width: 16px; height: 16px; }

.ic-t { font-family: "Liberation Sans", sans-serif; text-anchor: middle; }
.ic-may { font-size: 7px; fill: #fff; }
.ic-day { font-size: 20px; fill: #222; }
.ic-x { font-size: 18px; fill: #fff; }
.ic-r { font-size: 26px; fill: #fff; font-family: "Liberation Serif", serif; }
.ic-nog { font-size: 10px; fill: #152b34; font-weight: 700; }
```
